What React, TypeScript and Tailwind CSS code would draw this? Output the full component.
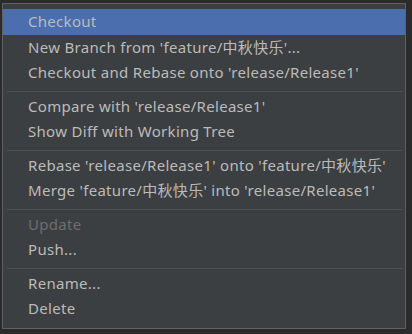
import React from "react";

type Item = { label: string; selected?: boolean; disabled?: boolean } | "sep";

const items: Item[] = [
  { label: "Checkout", selected: true },
  { label: "New Branch from 'feature/中秋快乐'..." },
  { label: "Checkout and Rebase onto 'release/Release1'" },
  "sep",
  { label: "Compare with 'release/Release1'" },
  { label: "Show Diff with Working Tree" },
  "sep",
  { label: "Rebase 'release/Release1' onto 'feature/中秋快乐'" },
  { label: "Merge 'feature/中秋快乐' into 'release/Release1'" },
  "sep",
  { label: "Update", disabled: true },
  { label: "Push..." },
  "sep",
  { label: "Rename..." },
  { label: "Delete" },
];

export default function App() {
  return (
    <div
      className="w-[412px] h-[334px] bg-[#2b2b2b] pl-[2px] pt-[3px] overflow-hidden"
      style={{ fontFamily: '"Noto Sans", "Noto Sans CJK SC", sans-serif' }}
    >
      <div className="w-[404px] h-[326px] border border-[#616161] bg-[#3c3f41] pt-[5px] flex flex-col">
        {items.map((it, i) =>
          it === "sep" ? (
            <div key={i} className="h-[8px] pt-[5px] pl-[4px] pr-[3px]">
              <div className="h-px bg-[#515151]" />
            </div>
          ) : (
            <div
              key={i}
              className={`h-[25.5px] leading-[25.5px] pl-[25px] text-[15px] tracking-[0.3px] whitespace-nowrap ${
                it.selected ? "bg-[#4b6eaf]" : ""
              } ${it.disabled ? "text-[#6e6e6e]" : "text-[#bbbbbb]"}`}
            >
              {it.label}
            </div>
          )
        )}
      </div>
    </div>
  );
}
